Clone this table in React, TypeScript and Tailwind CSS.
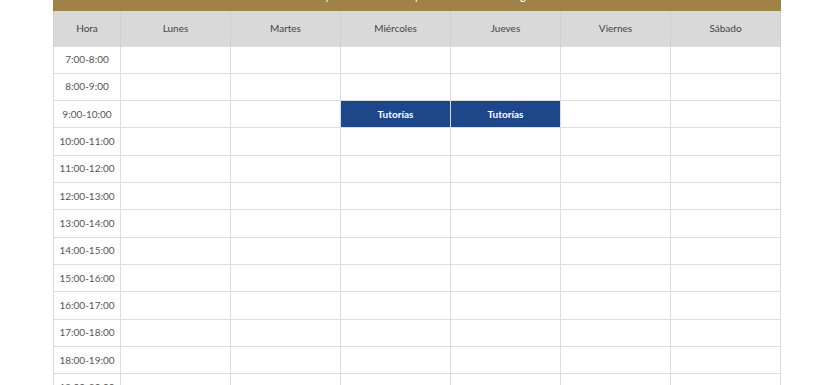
import React from 'react'

const days = ['Lunes', 'Martes', 'Miércoles', 'Jueves', 'Viernes', 'Sábado']

const hours = [
  '7:00-8:00',
  '8:00-9:00',
  '9:00-10:00',
  '10:00-11:00',
  '11:00-12:00',
  '12:00-13:00',
  '13:00-14:00',
  '14:00-15:00',
  '15:00-16:00',
  '16:00-17:00',
  '17:00-18:00',
  '18:00-19:00',
  '19:00-20:00',
]

// which cells hold an activity: key is "hour|day"
const slots: Record<string, string> = {
  '9:00-10:00|Miércoles': 'Tutorías',
  '9:00-10:00|Jueves': 'Tutorías',
}

export default function App() {
  return (
    <div className="w-[840px] h-[385px] overflow-hidden bg-white font-['Lato','Liberation_Sans',sans-serif]">
      <div className="ml-[53px] w-[728px]">
        {/* Title banner, scrolled partly out of view */}
        <div className="-mt-[19px] h-[30px] bg-[#a08148] flex items-center justify-center text-[11px] text-white">
          <span>
            Horas de <b>Tutorías</b> y de <b>Asesorías</b> del profesor: <b>Cecilia Georgina Flores Díaz</b>
          </span>
        </div>

        <table className="w-full table-fixed border-collapse">
          <colgroup>
            <col className="w-[67px]" />
            {days.map((d) => (
              <col key={d} />
            ))}
          </colgroup>
          <thead>
            <tr className="h-[35px] bg-[#d9d9d9]">
              <th className="border-x border-[#cfcfcf] text-[10px] font-normal text-[#444]">Hora</th>
              {days.map((d) => (
                <th key={d} className="border-x border-[#cfcfcf] text-[10px] font-normal text-[#444]">
                  {d}
                </th>
              ))}
            </tr>
          </thead>
          <tbody>
            {hours.map((h) => (
              <tr key={h} className="h-[27.33px]">
                <td className="border border-[#dcdcdc] text-center text-[10px] text-[#555] p-0">{h}</td>
                {days.map((d) => {
                  const label = slots[`${h}|${d}`]
                  return label ? (
                    <td
                      key={d}
                      className="border border-[#dcdcdc] bg-[#1e468a] text-center text-[10px] font-bold text-white p-0"
                    >
                      {label}
                    </td>
                  ) : (
                    <td key={d} className="border border-[#dcdcdc] p-0" />
                  )
                })}
              </tr>
            ))}
          </tbody>
        </table>
      </div>
    </div>
  )
}
